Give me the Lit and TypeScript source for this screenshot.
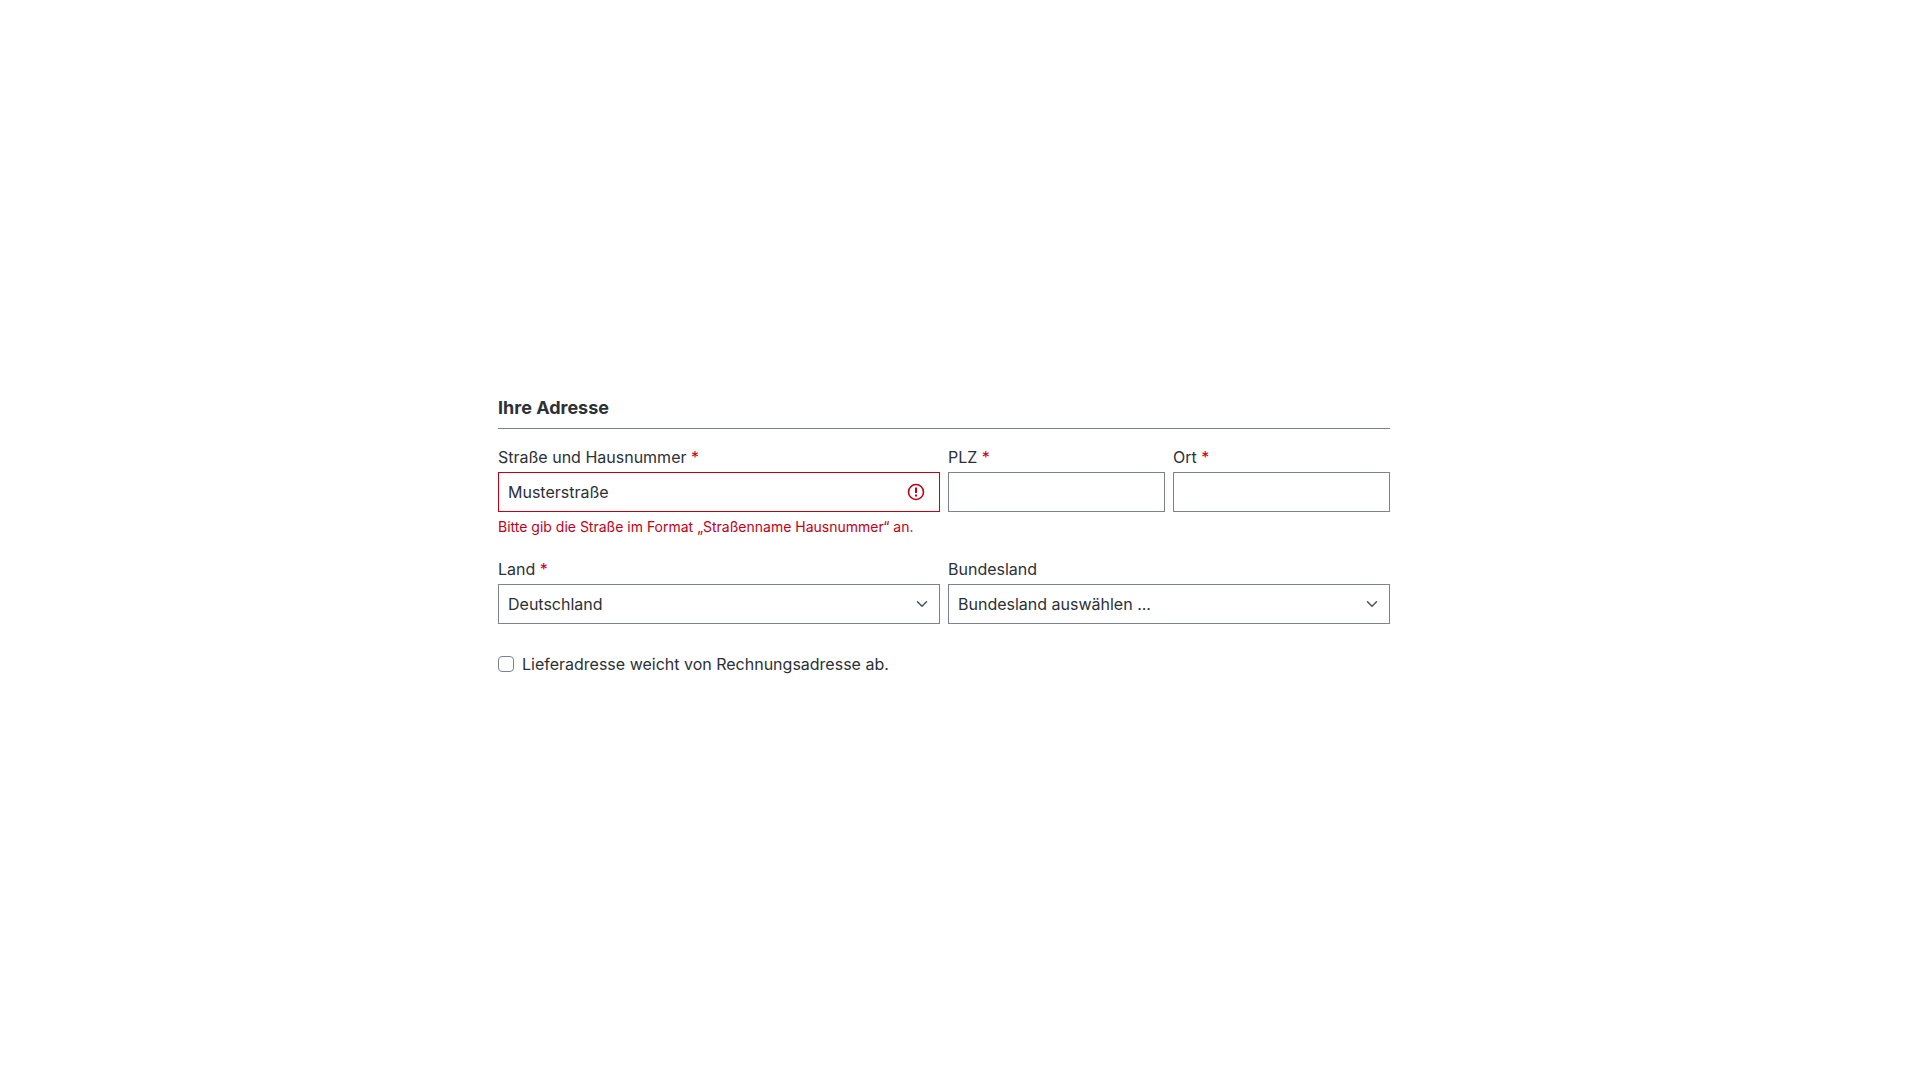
import { LitElement, html, css } from "lit";
import { customElement } from "lit/decorators.js";

@customElement("app-root")
export class AppRoot extends LitElement {
  static styles = css`
    :host {
      display: flex;
      align-items: center;
      justify-content: center;
      min-height: 100vh;
      padding: 0 32px 11px 0;
      box-sizing: border-box;
      background: #fff;
      color: #2b3136;
      font-family: Inter, "Liberation Sans", sans-serif;
      font-size: 16px;
      line-height: 24px;
    }
    * { box-sizing: border-box; }
    .address { width: 100%; max-width: 892px; }
    .title {
      margin: 0 0 16px;
      padding: 0 0 6px;
      border-bottom: 1px solid #74808b;
      font-size: 18px;
      line-height: 29px;
      font-weight: 700;
    }
    .row { display: grid; grid-template-columns: repeat(4, minmax(0, 1fr)); gap: 8px; margin-bottom: 20px; }
    .field { display: flex; flex-direction: column; }
    .wide { grid-column: span 2; }
    .label { margin-bottom: 3px; }
    .required { color: #c20017; }
    .control {
      width: 100%;
      height: 40px;
      margin: 0;
      padding: 0 9px;
      border: 1px solid #798490;
      border-radius: 0;
      background: #fff;
      color: inherit;
      font: inherit;
      appearance: none;
    }
    .box { position: relative; display: flex; align-items: center; }
    .invalid { border-color: #c20017; padding-right: 36px; }
    .icon { position: absolute; right: 15px; pointer-events: none; }
    .chevron { right: 12px; }
    .error { margin: 4px 0 0; color: #c20017; font-size: 14px; line-height: 21px; }
    .check { display: flex; align-items: center; gap: 8px; padding-top: 8px; }
    .tick {
      appearance: none;
      width: 16px;
      height: 16px;
      margin: 0;
      border: 1px solid #798490;
      border-radius: 4px;
      background: #fff;
    }
  `;

  private star() {
    return html`<span class="required">*</span>`;
  }

  private select(id: string, value: string) {
    return html`<div class="box">
      <select class="control" id=${id}><option selected>${value}</option></select>
      <svg class="icon chevron" width="12" height="12" viewBox="0 0 16 16" fill="none" stroke="#4a545e" stroke-width="2" stroke-linecap="round" stroke-linejoin="round" aria-hidden="true"><path d="m2 5 6 6 6-6" /></svg>
    </div>`;
  }

  render() {
    return html`<form class="address">
      <h2 class="title">Ihre Adresse</h2>
      <div class="row">
        <div class="field wide">
          <label class="label" for="street">Straße und Hausnummer ${this.star()}</label>
          <div class="box">
            <input class="control invalid" id="street" type="text" value="Musterstraße" aria-invalid="true" aria-describedby="street-error" />
            <svg class="icon" width="18" height="18" viewBox="0 0 18 18" fill="none" stroke="#c20017" stroke-width="1.6" aria-hidden="true"><circle cx="9" cy="9" r="7.5" /><path d="M9 4.5v5.5M9 11.5v2" stroke-width="2" /></svg>
          </div>
          <p class="error" id="street-error">Bitte gib die Straße im Format „Straßenname Hausnummer“ an.</p>
        </div>
        <div class="field">
          <label class="label" for="zip">PLZ ${this.star()}</label>
          <input class="control" id="zip" type="text" />
        </div>
        <div class="field">
          <label class="label" for="city">Ort ${this.star()}</label>
          <input class="control" id="city" type="text" />
        </div>
      </div>
      <div class="row">
        <div class="field wide">
          <label class="label" for="country">Land ${this.star()}</label>
          ${this.select("country", "Deutschland")}
        </div>
        <div class="field wide">
          <label class="label" for="state">Bundesland</label>
          ${this.select("state", "Bundesland auswählen ...")}
        </div>
      </div>
      <div class="check">
        <input class="tick" id="differs" type="checkbox" />
        <label for="differs">Lieferadresse weicht von Rechnungsadresse ab.</label>
      </div>
    </form>`;
  }
}
